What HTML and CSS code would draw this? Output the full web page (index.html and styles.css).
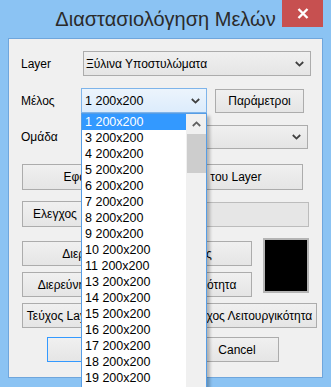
FILE: index.html
```html
<!DOCTYPE html>
<html>
<head>
  <title>Διαστασιολόγηση Μελών</title>
  <link rel="stylesheet" href="styles.css">
</head>
<body>

<div class="window">
  <div class="titlebar">
    <span class="title">Διαστασιολόγηση Μελών</span>
    <span class="close">
      <svg width="12" height="11" viewBox="0 0 12 11"><path d="M1.5 1 L10.5 10 M10.5 1 L1.5 10" stroke="#fff" stroke-width="2.4" fill="none"/></svg>
    </span>
  </div>

  <div class="client">
    <div class="row row-layer">
      <span class="label">Layer</span>
      <div class="combo combo-layer">
        <span class="combo-text">Ξύλινα Υποστυλώματα</span>
        <svg class="arrow" width="9" height="6" viewBox="0 0 9 6"><polyline points="0.8,1 4.5,4.6 8.2,1" stroke="#404040" stroke-width="1.8" fill="none"/></svg>
      </div>
    </div>

    <div class="row row-member">
      <span class="label label-member">Μέλος</span>
      <div class="combo combo-member">
        <span class="combo-text">1 200x200</span>
        <svg class="arrow" width="9" height="6" viewBox="0 0 9 6"><polyline points="0.8,1 4.5,4.6 8.2,1" stroke="#404040" stroke-width="1.8" fill="none"/></svg>

        <!-- open list of the member combo -->
        <div class="dropdown">
          <ul class="items">
            <li class="selected">1 200x200</li>
            <li>3 200x200</li>
            <li>4 200x200</li>
            <li>5 200x200</li>
            <li>6 200x200</li>
            <li>7 200x200</li>
            <li>8 200x200</li>
            <li>9 200x200</li>
            <li>10 200x200</li>
            <li>11 200x200</li>
            <li>13 200x200</li>
            <li>14 200x200</li>
            <li>15 200x200</li>
            <li>16 200x200</li>
            <li>17 200x200</li>
            <li>18 200x200</li>
            <li>19 200x200</li>
          </ul>
          <div class="scrollbar">
            <svg class="scroll-up" width="9" height="6" viewBox="0 0 9 6"><polyline points="0.8,5 4.5,1.4 8.2,5" stroke="#606060" stroke-width="1.8" fill="none"/></svg>
            <div class="thumb"></div>
          </div>
        </div>
      </div>
      <button class="btn btn-params">Παράμετροι</button>
    </div>

    <div class="row row-group">
      <span class="label">Ομάδα</span>
      <div class="combo combo-group">
        <span class="combo-text"></span>
        <svg class="arrow" width="9" height="6" viewBox="0 0 9 6"><polyline points="0.8,1 4.5,4.6 8.2,1" stroke="#404040" stroke-width="1.8" fill="none"/></svg>
      </div>
    </div>

    <div class="row row-apply">
      <button class="btn btn-apply">Εφαρμογή σε Όλα τα Μέλη του Layer</button>
    </div>

    <div class="row row-check">
      <button class="btn btn-check">Ελεγχος</button>
      <div class="progress"></div>
    </div>

    <div class="block">
      <div class="col">
        <button class="btn btn-wide">Διερεύνηση Διατομής Μέλος</button>
        <button class="btn btn-wide btn-second">Διερεύνηση Όλων σε Λειτουργικότητα</button>
      </div>
      <div class="swatch"></div>
    </div>

    <div class="row row-report">
      <button class="btn btn-report">Τεύχος Layer σε Αστοχία και Έλεγχος Λειτουργικότητα</button>
    </div>

    <div class="row row-actions">
      <button class="btn btn-ok">OK</button>
      <button class="btn btn-cancel">Cancel</button>
    </div>
  </div>
</div>

</body>
</html>
```

FILE: styles.css
```css
body {
  margin: 0;
  background-color: #8bc3f3;
  font-family: "Liberation Sans", Arial, sans-serif;
  font-size: 12px;
  overflow: hidden;
}

.window {
  width: 331px;
  height: 387px;
  overflow: hidden;
}

.titlebar {
  height: 38px;
  display: flex;
  align-items: flex-start;
}

.title {
  flex: 1;
  padding-left: 49px;
  padding-top: 8px;
  text-align: center;
  font-size: 20px;
  color: #2b2b2b;
}

.close {
  width: 41px;
  height: 27px;
  margin-right: 8px;
  background-color: #c75050;
  display: flex;
  align-items: center;
  justify-content: center;
}

.client {
  margin: 0 8px;
  height: 340px;
  box-sizing: border-box;
  border: 1px solid #6fa6dc;
  background-color: #f0f0f0;
}

.row {
  display: flex;
  align-items: center;
  margin-top: 12px;
}

.label {
  width: 62px;
  padding-left: 12px;
  color: #000;
}

.label-member {
  width: 60px;
}

.combo {
  position: relative;
  height: 25px;
  box-sizing: border-box;
  border: 1px solid #acacac;
  background: linear-gradient(#f0f0f0, #e5e5e5);
  display: flex;
  align-items: center;
}

.combo-text {
  flex: 1;
  padding-left: 2px;
  color: #000;
}

.arrow {
  margin-right: 6px;
}

.combo-layer {
  width: 228px;
}

.combo-member {
  width: 126px;
  border-color: #7eb4ea;
  background: linear-gradient(#ecf4fc, #dcecfc);
}

.combo-member .combo-text {
  padding-left: 3px;
  font-size: 12.5px;
}

.combo-group {
  width: 225px;
  height: 24px;
}

.dropdown {
  position: absolute;
  top: 24px;
  left: -1px;
  width: 126px;
  height: 290px;
  box-sizing: border-box;
  border: 1px solid #569de5;
  background-color: #fff;
  display: flex;
  box-shadow: 3px 3px 3px rgba(0, 0, 0, 0.25);
  z-index: 2;
}

.items {
  flex: 1;
  margin: 0;
  padding: 0;
  list-style: none;
}

.items li {
  height: 16px;
  line-height: 16px;
  padding-left: 3px;
  font-size: 12.5px;
  color: #000;
}

.items li.selected {
  background-color: #3399ff;
  color: #fff;
}

.scrollbar {
  width: 20px;
  background-color: #f0f0f0;
  display: flex;
  flex-direction: column;
  align-items: center;
}

.scroll-up {
  margin-top: 7px;
}

.thumb {
  width: 19px;
  height: 39px;
  margin-top: 7px;
  background-color: #cdcdcd;
}

.btn {
  height: 25px;
  box-sizing: border-box;
  border: 1px solid #acacac;
  background: linear-gradient(#f0f0f0, #e5e5e5);
  font-family: "Liberation Sans", Arial, sans-serif;
  font-size: 12px;
  color: #000;
  padding: 0;
  white-space: nowrap;
  overflow: hidden;
}

.btn-params {
  width: 89px;
  margin-left: 8px;
  height: 24px;
}

.row-apply,
.row-check,
.row-report {
  padding-left: 13px;
}

.row-apply {
  margin-top: 15px;
}

.btn-apply {
  width: 281px;
  height: 26px;
}

.row-check {
  margin-top: 11px;
}

.btn-check {
  width: 66px;
  height: 26px;
}

.progress {
  width: 216px;
  height: 25px;
  margin-left: 5px;
  box-sizing: border-box;
  border: 1px solid #bcbcbc;
  background-color: #e6e6e6;
}

.block {
  display: flex;
  align-items: flex-start;
  padding-left: 13px;
  margin-top: 11px;
}

.col {
  display: flex;
  flex-direction: column;
  padding-top: 3px;
}

.btn-wide {
  width: 230px;
}

.btn-second {
  margin-top: 6px;
}

.swatch {
  width: 46px;
  height: 55px;
  margin-left: 11px;
  box-sizing: border-box;
  border: 2px solid #b4b4b4;
  background-color: #000;
}

.row-report {
  margin-top: 6px;
}

.btn-report {
  width: 295px;
}

.row-actions {
  margin-top: 9px;
  padding-left: 38px;
}

.btn-ok {
  width: 90px;
  border-color: #3399ff;
}

.btn-cancel {
  width: 84px;
  margin-left: 58px;
}
```
